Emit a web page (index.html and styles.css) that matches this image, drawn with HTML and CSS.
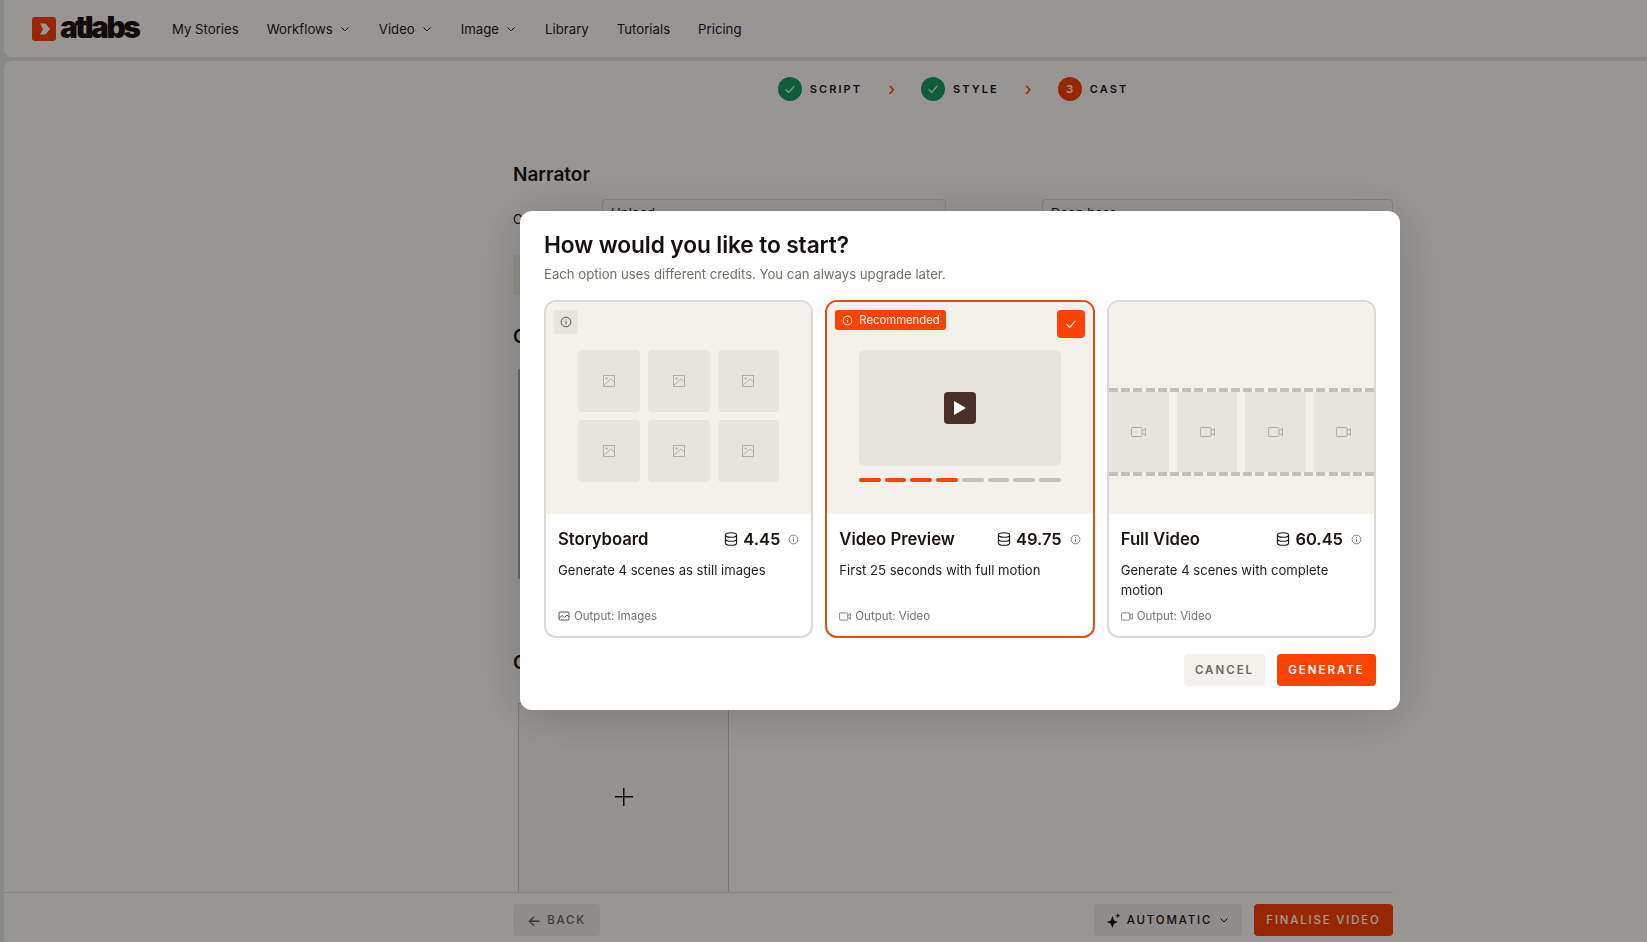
FILE: index.html
```html
<!DOCTYPE html>
<html lang="en">

<head>
  <meta charset="UTF-8" />
  <title>Atlabs - Cast</title>
  <link rel="stylesheet" href="styles.css">
</head>

<body>
  <!-- shared icons -->
  <svg class="icon-defs" xmlns="http://www.w3.org/2000/svg">
    <symbol id="i-chevron" viewBox="0 0 12 12"><path d="M2.5 4.5 6 8l3.5-3.5" fill="none" stroke="currentColor" stroke-width="1"/></symbol>
    <symbol id="i-check" viewBox="0 0 16 16"><path d="M3 8.5 6.5 12 13 4.5" fill="none" stroke="currentColor" stroke-width="1.3"/></symbol>
    <symbol id="i-info" viewBox="0 0 12 12"><circle cx="6" cy="6" r="4.8" fill="none" stroke="currentColor"/><path d="M6 5.4v3M6 3.4v1" stroke="currentColor"/></symbol>
    <symbol id="i-image" viewBox="0 0 12 12"><g fill="none" stroke="currentColor" stroke-width=".8"><rect x=".5" y=".5" width="11" height="11"/><path d="M.5 10.5 8 4l3.5 3"/></g><circle cx="3.6" cy="3.6" r="1" fill="currentColor"/></symbol>
    <symbol id="i-video" viewBox="0 0 15 10"><g fill="none" stroke="currentColor" stroke-width=".9"><rect x=".5" y=".5" width="10.5" height="9" rx="1"/><path d="M11 4 14.5 1.5v7L11 6"/></g></symbol>
    <symbol id="i-coins" viewBox="0 0 14 14"><g fill="none" stroke="currentColor" stroke-width="1.1"><ellipse cx="7" cy="3" rx="5.6" ry="2.3"/><path d="M1.4 3v8c0 1.3 2.5 2.3 5.6 2.3s5.6-1 5.6-2.3V3M1.4 7c0 1.3 2.5 2.3 5.6 2.3s5.6-1 5.6-2.3"/></g></symbol>
    <symbol id="i-gallery" viewBox="0 0 12 12"><g fill="none" stroke="currentColor"><rect x="1" y="2" width="10" height="8" rx="1"/><path d="m1 8 3-2.5L6.500 7.500 9 5l2 2"/></g></symbol>
  </svg>

  <header class="topbar">
    <a class="logo">
      <svg class="logo-mark" viewBox="0 0 24 24"><rect width="24" height="24" rx="3" fill="#fc4200"/><path d="M8 6.500h5.500L18 12l-4.500 5.500H8l3-5.500z" fill="#fdfbf8"/></svg>
      <span class="logo-text">atlabs</span>
    </a>
    <nav class="nav">
      <a>My Stories</a>
      <a>Workflows <svg class="chev"><use href="#i-chevron"/></svg></a>
      <a>Video <svg class="chev"><use href="#i-chevron"/></svg></a>
      <a>Image <svg class="chev"><use href="#i-chevron"/></svg></a>
      <a>Library</a>
      <a>Tutorials</a>
      <a>Pricing</a>
    </nav>
  </header>

  <main class="page">
    <div class="content">
      <div class="steps">
        <div class="step"><span class="step-dot done"><svg><use href="#i-check"/></svg></span>SCRIPT</div>
        <span class="step-arrow">&#8250;</span>
        <div class="step"><span class="step-dot done"><svg><use href="#i-check"/></svg></span>STYLE</div>
        <span class="step-arrow">&#8250;</span>
        <div class="step"><span class="step-dot active">3</span>CAST</div>
      </div>

      <h3 class="section-title">Narrator</h3>
      <div class="field-row">
        <span class="field-label">Character</span>
        <div class="field field-first">Upload</div>
        <div class="field field-second">Deep bass</div>
      </div>
      <div class="field-block"></div>

      <h3 class="section-title cast-title">Characters</h3>
      <div class="cast-box"></div>

      <h3 class="section-title other-title">Crowd</h3>
      <div class="add-box"><span class="plus"></span></div>
    </div>

    <footer class="bottombar">
      <button class="bar-btn back"><span class="back-arrow">&#8592;</span> BACK</button>
      <button class="bar-btn auto">
        <svg class="spark" viewBox="0 0 14 14"><path d="M6 2.500 7.500 7 11 8.500 7.500 10 6 14 4.500 10 1 8.500 4.500 7zM11 0l.7 1.800 1.800.7-1.800.7L11 5l-.7-1.800-1.800-.7 1.800-.7z" fill="#1d1412"/></svg>
        AUTOMATIC <svg class="chev"><use href="#i-chevron"/></svg>
      </button>
      <button class="bar-btn finalise">FINALISE VIDEO</button>
    </footer>
  </main>

  <div class="overlay">
    <div class="modal">
      <h2>How would you like to start?</h2>
      <p class="modal-sub">Each option uses different credits. You can always upgrade later.</p>

      <div class="options">
        <!-- Storyboard -->
        <div class="option">
          <div class="preview">
            <span class="info-box"><svg><use href="#i-info"/></svg></span>
            <div class="thumb-grid">
              <div class="thumb"><svg><use href="#i-image"/></svg></div>
              <div class="thumb"><svg><use href="#i-image"/></svg></div>
              <div class="thumb"><svg><use href="#i-image"/></svg></div>
              <div class="thumb"><svg><use href="#i-image"/></svg></div>
              <div class="thumb"><svg><use href="#i-image"/></svg></div>
              <div class="thumb"><svg><use href="#i-image"/></svg></div>
            </div>
          </div>
          <div class="option-body">
            <div class="option-head">
              <strong>Storyboard</strong>
              <span class="price"><svg class="coins"><use href="#i-coins"/></svg>4.45</span>
              <svg class="price-info"><use href="#i-info"/></svg>
            </div>
            <p class="option-desc">Generate 4 scenes as still images</p>
            <div class="output"><svg class="gallery"><use href="#i-gallery"/></svg>Output: Images</div>
          </div>
        </div>

        <!-- Video preview -->
        <div class="option selected">
          <div class="preview">
            <span class="badge"><svg><use href="#i-info"/></svg>Recommended</span>
            <span class="tick"><svg><use href="#i-check"/></svg></span>
            <div class="player">
              <div class="player-screen">
                <span class="play"><svg viewBox="0 0 12 14"><path d="M0 0v14l12-7z" fill="#fff"/></svg></span>
              </div>
              <div class="progress">
                <i class="on"></i><i class="on"></i><i class="on"></i><i class="on"></i>
                <i></i><i></i><i></i><i></i>
              </div>
            </div>
          </div>
          <div class="option-body">
            <div class="option-head">
              <strong>Video Preview</strong>
              <span class="price"><svg class="coins"><use href="#i-coins"/></svg>49.75</span>
              <svg class="price-info"><use href="#i-info"/></svg>
            </div>
            <p class="option-desc">First 25 seconds with full motion</p>
            <div class="output"><svg class="cam"><use href="#i-video"/></svg>Output: Video</div>
          </div>
        </div>

        <!-- Full video -->
        <div class="option">
          <div class="preview">
            <div class="film">
              <div class="frame"><svg><use href="#i-video"/></svg></div>
              <div class="frame"><svg><use href="#i-video"/></svg></div>
              <div class="frame"><svg><use href="#i-video"/></svg></div>
              <div class="frame"><svg><use href="#i-video"/></svg></div>
            </div>
          </div>
          <div class="option-body">
            <div class="option-head">
              <strong>Full Video</strong>
              <span class="price"><svg class="coins"><use href="#i-coins"/></svg>60.45</span>
              <svg class="price-info"><use href="#i-info"/></svg>
            </div>
            <p class="option-desc">Generate 4 scenes with complete motion</p>
            <div class="output"><svg class="cam"><use href="#i-video"/></svg>Output: Video</div>
          </div>
        </div>
      </div>

      <div class="modal-actions">
        <button class="btn-cancel">CANCEL</button>
        <button class="btn-generate">GENERATE</button>
      </div>
    </div>
  </div>
</body>

</html>
```

FILE: styles.css
```css
* {
  box-sizing: border-box;
}

body {
  margin: 0;
  height: 942px;
  overflow: hidden;
  display: flex;
  flex-direction: column;
  gap: 4px;
  padding-left: 4px;
  background: #e6e6de;
  font-family: "Inter", "Noto Sans", sans-serif;
  color: #1d1412;
}

.icon-defs {
  display: none;
}

/* top bar */
.topbar {
  height: 57px;
  flex-shrink: 0;
  display: flex;
  align-items: center;
  padding-left: 28px;
  background: #fdfbf8;
  border-radius: 0 0 0 8px;
}

.logo {
  display: flex;
  align-items: center;
  gap: 4px;
  width: 140px;
}

.logo-mark {
  width: 24px;
  height: 24px;
}

.logo-text {
  font-size: 30px;
  font-weight: 900;
  letter-spacing: -2.600px;
  line-height: 1;
  margin-top: -3px;
}

.nav {
  display: flex;
  align-items: center;
  gap: 28px;
  font-size: 13.200px;
}

.nav a {
  display: flex;
  align-items: center;
  gap: 6px;
}

.chev {
  width: 12px;
  height: 12px;
}

/* page */
.page {
  flex: 1;
  min-height: 0;
  display: flex;
  flex-direction: column;
  background: #fdfbf8;
  border-radius: 8px 0 0 0;
}

.content {
  flex: 1;
  min-height: 0;
  overflow: hidden;
  width: 880px;
  margin-left: 509px;
  padding-top: 16px;
}

.steps {
  display: flex;
  justify-content: center;
  align-items: center;
  gap: 26px;
  height: 24px;
  margin-bottom: 62px;
}

.step {
  display: flex;
  align-items: center;
  gap: 8px;
  font-size: 11px;
  font-weight: 600;
  letter-spacing: 2.100px;
}

.step-dot {
  width: 24px;
  height: 24px;
  border-radius: 50%;
  display: flex;
  align-items: center;
  justify-content: center;
  color: #fff;
  font-size: 11px;
  letter-spacing: 0;
}

.step-dot svg {
  width: 14px;
  height: 14px;
}

.step-dot.done {
  background: #1a9c66;
}

.step-dot.active {
  background: #fc4200;
}

.step-arrow {
  color: #fc4200;
  font-size: 18px;
  line-height: 1;
}

.section-title {
  margin: 0;
  font-size: 19px;
  font-weight: 600;
  line-height: 24px;
}

.field-row {
  display: flex;
  margin-top: 12px;
  height: 40px;
  font-size: 13px;
}

.field-label {
  width: 89px;
  padding-top: 12px;
}

.field {
  border: 1px solid #dcd9d5;
  border-radius: 4px;
  height: 40px;
  padding: 5px 8px;
}

.field-first {
  width: 344px;
}

.field-second {
  width: 351px;
  margin-left: 96px;
}

.field-block {
  height: 40px;
  margin-top: 16px;
  background: #f0eee9;
  border-radius: 4px;
}

.cast-title {
  margin-top: 30px;
}

.cast-box {
  margin: 20px 0 0 5px;
  width: 200px;
  height: 210px;
  border-left: 3px solid #b5b4ae;
}

.other-title {
  margin-top: 72px;
}

.add-box {
  margin: 28px 0 0 5px;
  width: 211px;
  height: 191px;
  padding-bottom: 4px;
  border: 1px solid #c9c8c2;
  display: flex;
  align-items: center;
  justify-content: center;
  background: #f7f5f1;
}

.plus {
  width: 18px;
  height: 18px;
  background:
    linear-gradient(#1d1412, #1d1412) center / 18px 1.500px no-repeat,
    linear-gradient(#1d1412, #1d1412) center / 1.500px 18px no-repeat;
}

.bottombar {
  flex-shrink: 0;
  height: 50px;
  border-top: 1px solid #dcdbd5;
  display: flex;
  align-items: center;
  gap: 12px;
  padding: 5px 0 0 509px;
  width: 1389px;
}

.bar-btn {
  height: 32px;
  border: none;
  border-radius: 4px;
  font-family: inherit;
  font-size: 11.500px;
  font-weight: 500;
  letter-spacing: 1.800px;
  display: flex;
  align-items: center;
  justify-content: center;
  gap: 6px;
}

.back {
  width: 87px;
  background: #eeece8;
  color: #6d625e;
  margin-right: auto;
}

.back-arrow {
  font-size: 15px;
  letter-spacing: 0;
}

.auto {
  width: 148px;
  background: #eeece8;
  color: #1d1412;
}

.spark {
  width: 15px;
  height: 15px;
}

.finalise {
  width: 139px;
  background: #fc4200;
  color: #fff;
}

/* modal */
.overlay {
  position: fixed;
  inset: 0;
  background: rgba(0, 0, 0, 0.4);
}

.modal {
  width: 880px;
  height: 499px;
  margin: 211px 0 0 520px;
  padding: 20px 24px 24px;
  background: #fff;
  border-radius: 12px;
  box-shadow: 0 4px 50px rgba(0, 0, 0, 0.2);
}

.modal h2 {
  margin: 0;
  font-size: 22.700px;
  font-weight: 600;
  line-height: 28px;
  letter-spacing: -0.1px;
  color: #161010;
}

.modal-sub {
  margin: 5px 0 0;
  font-size: 13.150px;
  line-height: 20px;
  color: #73706b;
}

.options {
  display: grid;
  grid-template-columns: repeat(3, 1fr);
  gap: 12px;
  margin-top: 16px;
}

.option {
  height: 338px;
  border: 2px solid #dcd9d5;
  border-radius: 12px;
  overflow: hidden;
  display: flex;
  flex-direction: column;
}

.option.selected {
  border-color: #de4f14;
}

.preview {
  position: relative;
  height: 212px;
  flex-shrink: 0;
  background: #f4f0eb;
}

.info-box {
  position: absolute;
  left: 8px;
  top: 8px;
  width: 24px;
  height: 24px;
  background: #e7e3de;
  border-radius: 3px;
  display: flex;
  align-items: center;
  justify-content: center;
}

.info-box svg {
  width: 12px;
  height: 12px;
  color: #5c5652;
}

.thumb-grid {
  display: grid;
  grid-template-columns: repeat(3, 61.700px);
  grid-auto-rows: 62px;
  gap: 8px;
  justify-content: center;
  padding-top: 48px;
}

.thumb,
.frame {
  background: #e7e3de;
  display: flex;
  align-items: center;
  justify-content: center;
  color: #a8a29c;
}

.thumb {
  border-radius: 4px;
}

.thumb svg {
  width: 12px;
  height: 12px;
}

.badge {
  position: absolute;
  left: 8px;
  top: 8px;
  height: 20px;
  width: 111px;
  padding-left: 7px;
  display: flex;
  align-items: center;
  gap: 6px;
  background: #fc4200;
  color: #fff;
  border-radius: 3px;
  font-size: 11.300px;
}

.badge svg {
  width: 11px;
  height: 11px;
}

.tick {
  position: absolute;
  right: 8px;
  top: 8px;
  width: 28px;
  height: 28px;
  background: #fc4200;
  color: #fff;
  border-radius: 4px;
  display: flex;
  align-items: center;
  justify-content: center;
}

.tick svg {
  width: 14px;
  height: 14px;
}

.player {
  width: 202px;
  margin: 0 auto;
  padding-top: 48px;
}

.player-screen {
  height: 116px;
  background: #e7e3de;
  border-radius: 6px;
  display: flex;
  align-items: center;
  justify-content: center;
}

.play {
  width: 32px;
  height: 32px;
  background: #4a3028;
  border-radius: 4px;
  display: flex;
  align-items: center;
  justify-content: center;
}

.play svg {
  width: 12px;
  height: 14px;
}

.progress {
  display: flex;
  gap: 4px;
  margin-top: 12px;
}

.progress i {
  flex: 1;
  height: 4px;
  border-radius: 2px;
  background: #c4bfb8;
}

.progress i.on {
  background: #fc4200;
}

.film {
  display: flex;
  gap: 8px;
  height: 88px;
  margin-top: 86px;
  padding: 4px 0;
  background:
    repeating-linear-gradient(90deg, #c4bfb8 0 9px, transparent 9px 12.200px) top / 100% 4px no-repeat,
    repeating-linear-gradient(90deg, #c4bfb8 0 9px, transparent 9px 12.200px) bottom / 100% 4px no-repeat;
}

.frame {
  flex: 1;
}

.frame svg {
  width: 15px;
  height: 10px;
}

.option-body {
  flex: 1;
  padding: 13px 12px 0 12px;
  display: flex;
  flex-direction: column;
}

.option-head {
  display: flex;
  align-items: center;
  height: 24px;
}

.option-head strong {
  font-size: 16.700px;
  font-weight: 600;
  margin-right: auto;
}

.price {
  display: flex;
  align-items: center;
  gap: 5px;
  font-size: 16.500px;
  font-weight: 600;
}

.coins {
  width: 14px;
  height: 14px;
}

.price-info {
  width: 11px;
  height: 11px;
  margin-left: 8px;
  color: #7a7570;
}

.option-desc {
  margin: 9px 0 0;
  font-size: 13.100px;
  line-height: 20px;
  height: 40px;
  color: #241c1a;
}

.output {
  display: flex;
  align-items: center;
  gap: 4px;
  margin-top: 8px;
  font-size: 11.500px;
  line-height: 16px;
  color: #7a7570;
}

.gallery {
  width: 12px;
  height: 12px;
  color: #5c5652;
}

.cam {
  width: 12px;
  height: 9px;
  color: #5c5652;
}

.modal-actions {
  display: flex;
  justify-content: flex-end;
  gap: 12px;
  margin-top: 16px;
}

.modal-actions button {
  height: 32px;
  border: none;
  border-radius: 4px;
  font-family: inherit;
  font-size: 11.500px;
  font-weight: 600;
  letter-spacing: 2px;
}

.btn-cancel {
  width: 81px;
  background: #f4f0eb;
  color: #6d6762;
}

.btn-generate {
  width: 99px;
  background: #fc4200;
  color: #fff;
}
```
